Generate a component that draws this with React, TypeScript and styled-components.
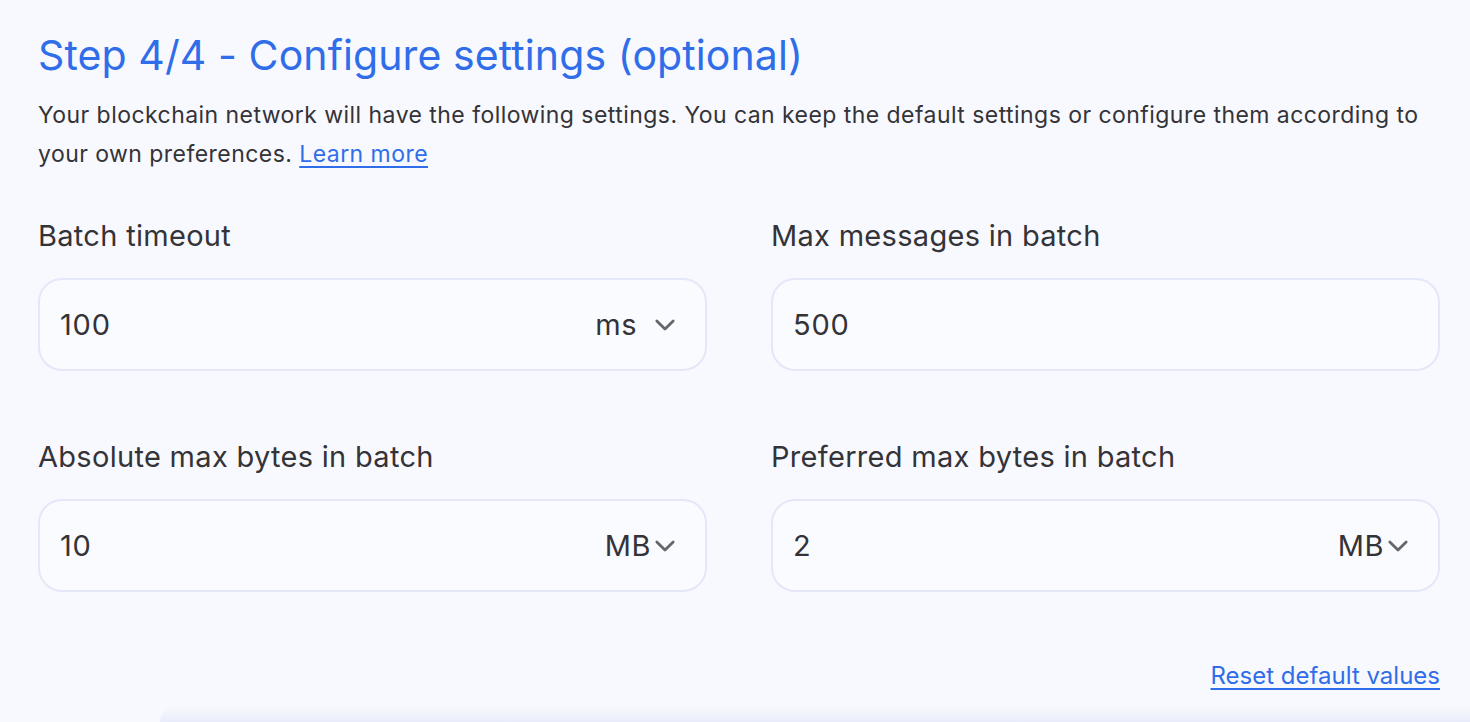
import React, { useState } from 'react';
import styled, { createGlobalStyle } from 'styled-components';

const GlobalStyle = createGlobalStyle`
  html, body {
    margin: 0;
    padding: 0;
    background: #f8f9fe;
  }
  body {
    font-family: Inter, "Noto Sans", sans-serif;
    color: #333338;
  }
`;

const Page = styled.div`
  width: 1470px;
  height: 722px;
  overflow: hidden;
  box-sizing: border-box;
  display: flex;
  flex-direction: column;
  background: #f8f9fe;
`;

const Content = styled.div`
  flex: 1;
  padding: 27px 30px 0 38px;
  display: flex;
  flex-direction: column;
`;

const Title = styled.h1`
  margin: 0;
  font-size: 41px;
  line-height: 56px;
  font-weight: 400;
  color: #306de9;
  letter-spacing: 0.1px;
`;

const Description = styled.p`
  margin: 13px 0 0;
  font-size: 23px;
  line-height: 39px;
  letter-spacing: 0.45px;
  color: #333338;
`;

const Link = styled.a`
  color: #306de9;
  text-decoration: underline;
  text-decoration-thickness: 1.5px;
  text-underline-offset: 4px;
  cursor: pointer;
`;

const Grid = styled.div`
  margin-top: 44px;
  display: grid;
  grid-template-columns: 1fr 1fr;
  column-gap: 64px;
  row-gap: 68px;
`;

const Field = styled.div`
  display: flex;
  flex-direction: column;
  gap: 24px;
`;

const Label = styled.label`
  font-size: 29px;
  line-height: 36px;
  letter-spacing: 0.3px;
  color: #333338;
`;

const InputBox = styled.div`
  height: 93px;
  box-sizing: border-box;
  border: 2px solid #e3e7f8;
  border-radius: 24px;
  background: #fafbff;
  display: flex;
  align-items: center;
  padding: 0 26px 0 20px;
`;

const Input = styled.input`
  flex: 1;
  min-width: 0;
  border: none;
  outline: none;
  background: transparent;
  font-family: inherit;
  font-size: 29px;
  letter-spacing: 0.8px;
  color: #333338;
  padding: 0;
`;

const Unit = styled.button<{ $tight?: boolean }>`
  display: flex;
  align-items: center;
  gap: ${(p) => (p.$tight ? '0' : '14px')};
  border: none;
  background: transparent;
  padding: 0;
  font-family: inherit;
  font-size: 29px;
  letter-spacing: 0.5px;
  color: #333338;
  cursor: pointer;
`;

const Footer = styled.div`
  display: flex;
  justify-content: flex-end;
  margin-top: 69px;
`;

const ResetLink = styled(Link)`
  font-size: 24px;
  line-height: 30px;
`;

const BottomFade = styled.div`
  height: 16px;
  margin-left: 160px;
  background: linear-gradient(to bottom, rgba(236, 238, 252, 0), #e9ecfb);
  border-top-left-radius: 60px;
`;

const Chevron = () => (
  <svg width="28" height="28" viewBox="0 0 24 24" fill="none">
    <path
      d="M5 8.5l7 7 7-7"
      stroke="#66666c"
      strokeWidth="2.4"
      strokeLinecap="round"
      strokeLinejoin="round"
    />
  </svg>
);

type FieldDef = {
  label: string;
  value: string;
  unit?: string;
  tight?: boolean;
};

const fields: FieldDef[] = [
  { label: 'Batch timeout', value: '100', unit: 'ms' },
  { label: 'Max messages in batch', value: '500' },
  { label: 'Absolute max bytes in batch', value: '10', unit: 'MB', tight: true },
  { label: 'Preferred max bytes in batch', value: '2', unit: 'MB', tight: true },
];

const App = () => {
  const [values, setValues] = useState(fields.map((f) => f.value));

  return (
    <Page>
      <GlobalStyle />
      <Content>
        <Title>Step 4/4 - Configure settings (optional)</Title>
        <Description>
          Your blockchain network will have the following settings. You can keep
          the default settings or configure them according to your own
          preferences. <Link>Learn more</Link>
        </Description>
        <Grid>
          {fields.map((f, i) => (
            <Field key={f.label}>
              <Label>{f.label}</Label>
              <InputBox>
                <Input
                  value={values[i]}
                  onChange={(e) => {
                    const next = [...values];
                    next[i] = e.target.value;
                    setValues(next);
                  }}
                />
                {f.unit && (
                  <Unit $tight={f.tight}>
                    {f.unit}
                    <Chevron />
                  </Unit>
                )}
              </InputBox>
            </Field>
          ))}
        </Grid>
        <Footer>
          <ResetLink onClick={() => setValues(fields.map((f) => f.value))}>
            Reset default values
          </ResetLink>
        </Footer>
      </Content>
      <BottomFade />
    </Page>
  );
};

export default App;
